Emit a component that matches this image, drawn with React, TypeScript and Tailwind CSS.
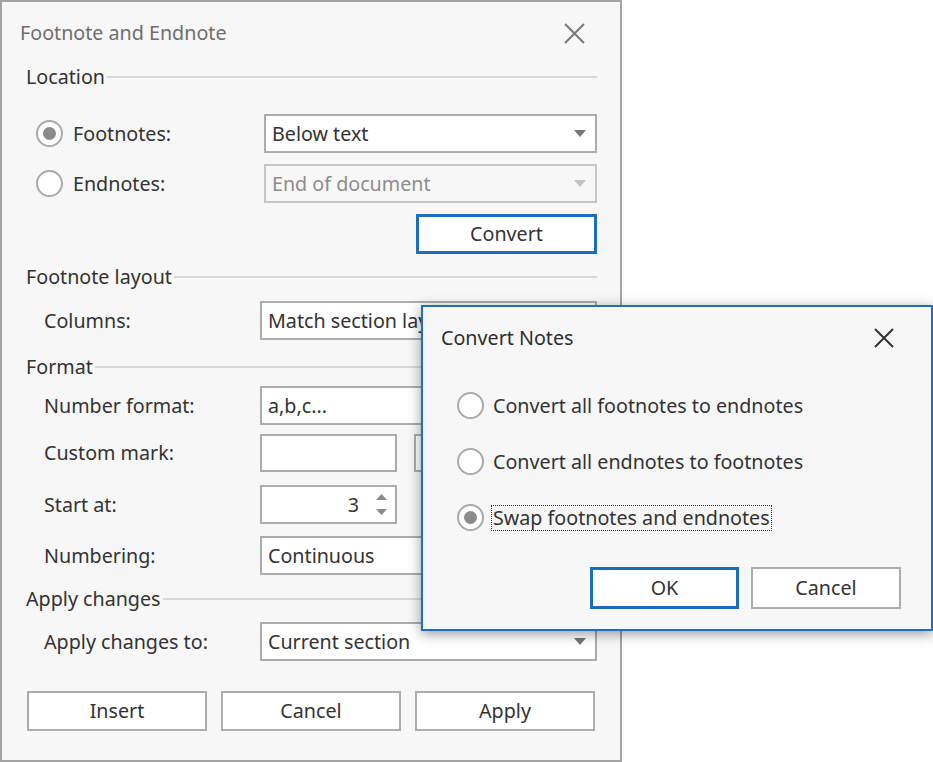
import type { ReactNode } from 'react'

const font = { fontFamily: '"Noto Sans", "Open Sans", sans-serif' }

function Arrow({ muted }: { muted?: boolean }) {
  return (
    <svg width="12" height="7" viewBox="0 0 12 7" className="shrink-0">
      <polygon points="0,0 12,0 6,7" fill={muted ? '#c2c2c2' : '#777777'} />
    </svg>
  )
}

function CloseIcon({ color, size }: { color: string; size: number }) {
  return (
    <svg width={size} height={size} viewBox="0 0 20 20">
      <path d="M1 1 L19 19 M19 1 L1 19" stroke={color} strokeWidth="2" fill="none" />
    </svg>
  )
}

function Radio({ checked }: { checked?: boolean }) {
  return (
    <span className="w-[27px] h-[27px] shrink-0 rounded-full border-2 border-[#a9a9a9] bg-white flex items-center justify-center">
      {checked && <span className="w-[13px] h-[13px] rounded-full bg-[#8a8a8a]" />}
    </span>
  )
}

function GroupHeader({ title }: { title: string }) {
  return (
    <div className="flex items-center h-6">
      <span className="text-[#333]">{title}</span>
      <div className="flex-1 h-[2px] bg-[#d8d8d8] ml-[2px]" />
    </div>
  )
}

function Select({ value, muted, className }: { value: string; muted?: boolean; className?: string }) {
  return (
    <div
      className={`h-[39px] border-2 ${muted ? 'border-[#c6c6c6] bg-[#f7f7f7] text-[#8d8d8d]' : 'border-[#acacac] bg-white text-[#333]'} flex items-center pl-[6px] pr-[9px] ${className ?? ''}`}
    >
      <span className="flex-1 whitespace-nowrap overflow-hidden">{value}</span>
      <Arrow muted={muted} />
    </div>
  )
}

function Field({ label, children }: { label: string; children: ReactNode }) {
  return (
    <div className="flex items-center pl-[18px]">
      <span className="w-[216px] shrink-0 text-[#333]">{label}</span>
      {children}
    </div>
  )
}

function Button({ label, primary, className }: { label: string; primary?: boolean; className?: string }) {
  return (
    <button
      className={`h-[40px] bg-white text-[#333] flex items-center justify-center ${primary ? 'border-[3px] border-[#1a6ec2]' : 'border-2 border-[#acacac]'} ${className ?? ''}`}
    >
      {label}
    </button>
  )
}

function ConvertNotes() {
  const options = [
    { label: 'Convert all footnotes to endnotes' },
    { label: 'Convert all endnotes to footnotes' },
    { label: 'Swap footnotes and endnotes', checked: true },
  ]
  return (
    <div className="absolute left-[421px] top-[305px] w-[512px] h-[326px] border-2 border-[#1c6fc1] bg-[#f7f7f7] shadow-[0_3px_12px_rgba(0,0,0,0.4)] flex flex-col">
      <div className="h-[62px] flex items-center justify-between pl-[18px] pr-[37px] shrink-0">
        <span className="text-[#2e2e2e]">Convert Notes</span>
        <CloseIcon color="#333333" size={20} />
      </div>
      <div className="flex flex-col gap-[29px] pl-[34px] mt-[23px]">
        {options.map((o) => (
          <div key={o.label} className="flex items-center h-[27px]">
            <Radio checked={o.checked} />
            <span
              className={`ml-[7px] px-[1px] leading-[24px] text-[#333] border border-dotted whitespace-nowrap ${o.checked ? 'border-[#333]' : 'border-transparent'}`}
            >
              {o.label}
            </span>
          </div>
        ))}
      </div>
      <div className="flex justify-end gap-[12px] pr-[30px] mt-[36px]">
        <Button label="OK" primary className="w-[149px] h-[42px]" />
        <Button label="Cancel" className="w-[150px] h-[42px]" />
      </div>
    </div>
  )
}

export default function App() {
  return (
    <div className="relative w-[933px] h-[762px] bg-white text-[19.7px]" style={font}>
      <div className="w-[622px] h-[762px] border-2 border-[#a3a3a3] bg-[#f7f7f7] flex flex-col">
        <div className="h-[62px] flex items-center justify-between pl-[18px] pr-[35px] shrink-0">
          <span className="text-[#6e6e6e]">Footnote and Endnote</span>
          <CloseIcon color="#7a7a7a" size={21} />
        </div>

        <div className="flex flex-col px-[24px] pr-[23px]">
          <div className="mt-[1px]">
            <GroupHeader title="Location" />
          </div>

          <div className="flex flex-col gap-[11px] mt-[25px]">
            <div className="flex items-center pl-[10px]">
              <Radio checked />
              <span className="ml-[10px] w-[191px] text-[#333]">Footnotes:</span>
              <Select value="Below text" className="flex-1" />
            </div>
            <div className="flex items-center pl-[10px]">
              <Radio />
              <span className="ml-[10px] w-[191px] text-[#333]">Endnotes:</span>
              <Select value="End of document" muted className="flex-1" />
            </div>
            <div className="flex justify-end">
              <Button label="Convert" primary className="w-[181px]" />
            </div>
          </div>

          <div className="mt-[11px]">
            <GroupHeader title="Footnote layout" />
          </div>
          <div className="mt-[12px]">
            <Field label="Columns:">
              <Select value="Match section layout" className="flex-1" />
            </Field>
          </div>

          <div className="mt-[15px]">
            <GroupHeader title="Format" />
          </div>
          <div className="flex flex-col mt-[7px]">
            <Field label="Number format:">
              <Select value="a,b,c..." className="flex-1" />
            </Field>
            <div className="mt-[9px]">
              <Field label="Custom mark:">
                <div className="w-[137px] h-[38px] border-2 border-[#acacac] bg-white" />
                {/* symbol button sits under the Convert Notes window */}
                <div className="ml-[17px] flex-1 h-[38px] border-2 border-[#acacac] bg-white" />
              </Field>
            </div>
            <div className="mt-[13px]">
              <Field label="Start at:">
                <div className="w-[137px] h-[39px] border-2 border-[#acacac] bg-white flex items-center justify-end pr-[8px] text-[#333]">
                  <span className="mr-[17px]">3</span>
                  <div className="flex flex-col gap-[9px]">
                    <svg width="11" height="6" viewBox="0 0 11 6">
                      <polygon points="0,6 11,6 5.5,0" fill="#8a8a8a" />
                    </svg>
                    <svg width="11" height="6" viewBox="0 0 11 6">
                      <polygon points="0,0 11,0 5.5,6" fill="#8a8a8a" />
                    </svg>
                  </div>
                </div>
              </Field>
            </div>
            <div className="mt-[12px]">
              <Field label="Numbering:">
                <Select value="Continuous" className="flex-1" />
              </Field>
            </div>
          </div>

          <div className="mt-[12px]">
            <GroupHeader title="Apply changes" />
          </div>
          <div className="mt-[11px]">
            <Field label="Apply changes to:">
              <Select value="Current section" className="flex-1" />
            </Field>
          </div>

          <div className="flex gap-[14px] mt-[30px] pl-[1px]">
            <Button label="Insert" className="w-[180px]" />
            <Button label="Cancel" className="w-[180px]" />
            <Button label="Apply" className="w-[180px]" />
          </div>
        </div>
      </div>

      <ConvertNotes />
    </div>
  )
}
